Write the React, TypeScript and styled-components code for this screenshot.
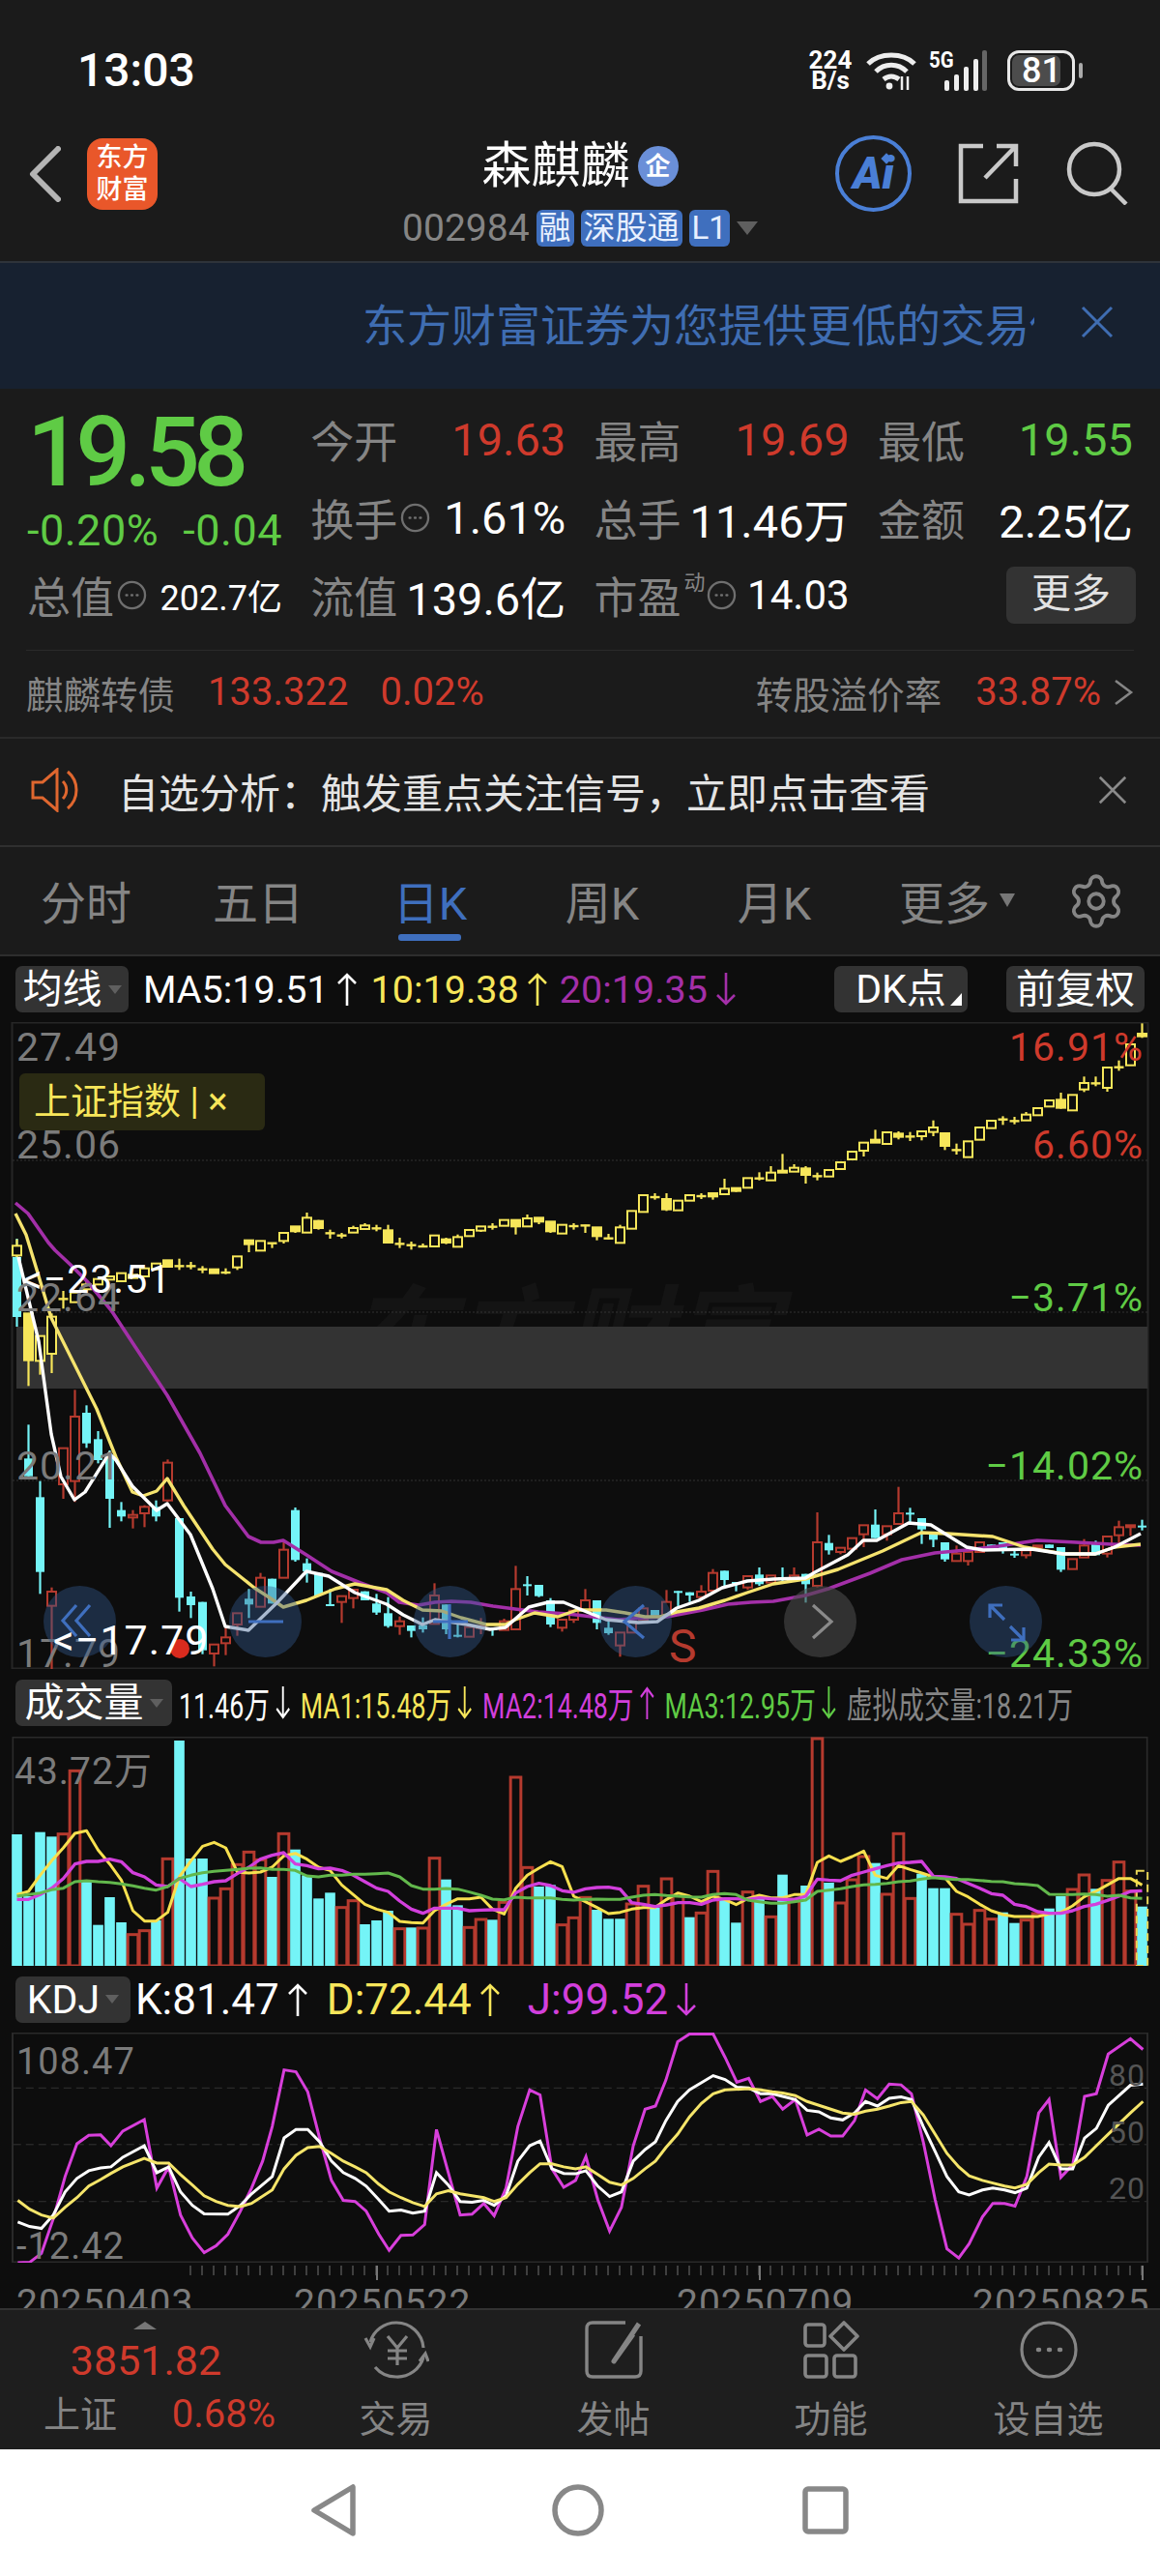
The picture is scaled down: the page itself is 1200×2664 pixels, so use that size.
import React from "react";
import styled, { createGlobalStyle } from "styled-components";
import { Settings } from "lucide-react";

const RED = "#cf3a2c";
const BAR_RED = "#b53a2e";
const GREEN = "#5fcb45";
const CYAN = "#74f4f7";
const YELLOW = "#f7e65a";
const PURPLE = "#a32fa8";
const PINK = "#d23fdc";
const BLUE = "#3f6fbe";
const GREY = "#858585";

const GlobalStyle = createGlobalStyle`
  html, body { margin: 0; padding: 0; background: #1b1b1b; overflow: hidden; }
  * { box-sizing: border-box; }
  body { font-family: Roboto, "Noto Sans CJK SC", sans-serif; }
`;

const Page = styled.div`
  width: 1200px;
  height: 2664px;
  display: flex;
  flex-direction: column;
  background: #1b1b1b;
  overflow: hidden;
`;

/* ---------- status bar ---------- */
const StatusBar = styled.div`
  height: 120px;
  display: flex;
  align-items: center;
  padding: 26px 78px 0 80px;
  color: #fff;
`;
const Clock = styled.div`
  font-size: 48px;
  font-weight: 500;
  flex: 1;
  line-height: 1;
`;
const StatusIcons = styled.div`
  display: flex;
  align-items: center;
  gap: 13px;
`;
const Speed = styled.div`
  font-size: 26px;
  font-weight: 700;
  line-height: 21px;
  text-align: center;
  width: 48px;
`;
const FiveG = styled.span`
  font-size: 24px;
  font-weight: 700;
  position: absolute;
  left: 0;
  top: -4px;
  transform: scaleX(0.85);
  transform-origin: left;
`;
const SignalWrap = styled.div`
  position: relative;
  width: 62px;
  height: 42px;
  margin-right: 6px;
`;
const Battery = styled.div`
  width: 70px;
  height: 42px;
  border: 3px solid #e8e8e8;
  border-radius: 12px;
  padding: 2px;
  position: relative;
  margin-right: 10px;
  &::after {
    content: "";
    position: absolute;
    right: -11px;
    top: 10px;
    width: 4px;
    height: 16px;
    background: #aaa;
    border-radius: 2px;
  }
`;
const BatteryFill = styled.div`
  height: 100%;
  width: 84%;
  background: #4c4c4c;
  border-radius: 7px;
  font-size: 36px;
  font-weight: 500;
  line-height: 32px;
  padding-left: 10px;
`;

/* ---------- stock header ---------- */
const Header = styled.div`
  height: 152px;
  display: grid;
  grid-template-columns: 1fr auto 1fr;
  border-bottom: 2px solid #2e333a;
`;
const HeaderLeft = styled.div`
  display: flex;
  align-items: center;
  gap: 27px;
  padding: 0 0 30px 30px;
`;
const Logo = styled.div`
  width: 73px;
  height: 74px;
  border-radius: 16px;
  background: #e9572a;
  color: #fff;
  font-size: 27px;
  font-weight: 500;
  line-height: 33px;
  text-align: center;
  padding-top: 4px;
`;
const HeaderCenter = styled.div`
  display: flex;
  flex-direction: column;
  align-items: center;
  padding-top: 24px;
  gap: 16px;
`;
const TitleRow = styled.div`
  display: flex;
  align-items: center;
  gap: 8px;
  color: #fff;
  font-size: 51px;
  line-height: 56px;
`;
const QualBadge = styled.span`
  width: 42px;
  height: 42px;
  border-radius: 50%;
  background: #6a8fd8;
  color: #fff;
  font-size: 26px;
  font-weight: 700;
  line-height: 42px;
  text-align: center;
`;
const SubRow = styled.div`
  display: flex;
  align-items: center;
  gap: 7px;
  font-size: 39px;
  color: ${GREY};
  line-height: 40px;
`;
const Tag = styled.span`
  background: ${BLUE};
  color: #e8f0ff;
  border-radius: 6px;
  font-size: 33px;
  line-height: 38px;
  height: 38px;
  padding: 0 3px;
`;
const Caret = styled.span<{ $w?: number }>`
  width: 0;
  height: 0;
  border-left: ${(p) => p.$w ?? 11}px solid transparent;
  border-right: ${(p) => p.$w ?? 11}px solid transparent;
  border-top: ${(p) => (p.$w ?? 11) * 1.3}px solid #5f5f5f;
`;
const HeaderRight = styled.div`
  display: flex;
  justify-content: flex-end;
  align-items: center;
  gap: 48px;
  padding: 0 32px 32px 0;
`;
const AiCircle = styled.div`
  width: 79px;
  height: 79px;
  border: 4px solid #4a7fd6;
  border-radius: 50%;
  color: #4a7fd6;
  font-size: 46px;
  font-weight: 900;
  font-style: italic;
  text-align: center;
  line-height: 70px;
  position: relative;
  &::after {
    content: "";
    position: absolute;
    right: 18px;
    top: 16px;
    width: 8px;
    height: 8px;
    background: #4a7fd6;
    transform: rotate(45deg);
  }
`;

/* ---------- banner ---------- */
const Banner = styled.div`
  height: 130px;
  background: #172130;
  display: flex;
  align-items: center;
  padding: 0 48px 8px 375px;
  justify-content: space-between;
`;
const BannerText = styled.div`
  width: 695px;
  overflow: hidden;
  white-space: nowrap;
  font-size: 46px;
  color: #3f6db2;
`;

/* ---------- quote ---------- */
const Quote = styled.div`
  height: 270px;
  padding: 12px 28px 0;
  display: grid;
  grid-template-columns: repeat(4, 264px);
  grid-template-rows: 80px 82px 78px;
  column-gap: 29.3px;
`;
const Cell = styled.div`
  display: flex;
  align-items: center;
  justify-content: space-between;
  white-space: nowrap;
`;
const Price = styled.div`
  font-size: 100px;
  font-weight: 500;
  letter-spacing: -6.5px;
  color: ${GREEN};
  line-height: 1;
  padding: 4px 0 0 0;
`;
const Change = styled(Cell)`
  font-size: 45px;
  color: ${GREEN};
  padding-top: 26px;
  letter-spacing: 0.5px;
`;
const QLabel = styled.span`
  display: inline-flex;
  align-items: center;
  font-size: 45px;
  color: ${GREY};
  gap: 3px;
`;
const QValue = styled.span<{ $color?: string; $size?: number }>`
  font-size: ${(p) => p.$size ?? 47}px;
  color: ${(p) => p.$color ?? "#fff"};
`;
const Sup = styled.sup`
  font-size: 22px;
  margin: -24px -2px 0 0;
  color: ${GREY};
  line-height: 1;
`;
const MoreBtn = styled.div`
  width: 134px;
  height: 59px;
  background: #333;
  border-radius: 8px;
  color: #e2e2e2;
  font-size: 41px;
  text-align: center;
  line-height: 56px;
  margin-left: auto;
  margin-right: -3px;
`;

const BondRow = styled.div`
  height: 90px;
  margin: 0 27px;
  border-top: 1px solid #2a2a2a;
  display: flex;
  align-items: center;
  white-space: nowrap;
  padding-bottom: 4px;
`;
const BondName = styled.span<{ $gap?: number }>`
  font-size: 38.5px;
  color: ${GREY};
  margin-right: ${(p) => p.$gap ?? 0}px;
`;
const BondValue = styled.span<{ $gap?: number }>`
  font-size: 40px;
  color: ${RED};
  margin-right: ${(p) => p.$gap ?? 0}px;
`;
const Spacer = styled.div`
  flex: 1;
`;

const Notice = styled.div`
  height: 114px;
  border-top: 2px solid #2a2a2a;
  border-bottom: 2px solid #2f2f2f;
  display: flex;
  align-items: center;
  padding: 0 34px 4px 32px;
  font-size: 42px;
  color: #e4e4e4;
  gap: 34px;
`;

/* ---------- period tabs ---------- */
const Tabs = styled.div`
  height: 113px;
  display: flex;
  align-items: center;
  border-bottom: 2px solid #2e2e2e;
`;
const Tab = styled.div<{ $active?: boolean }>`
  width: 178px;
  height: 100%;
  display: flex;
  align-items: center;
  justify-content: center;
  gap: 10px;
  font-size: 47px;
  padding-bottom: 2px;
  color: ${(p) => (p.$active ? BLUE : GREY)};
  position: relative;
  &::after {
    content: "";
    display: ${(p) => (p.$active ? "block" : "none")};
    position: absolute;
    left: 56px;
    bottom: 14px;
    width: 65px;
    height: 7px;
    border-radius: 3px;
    background: ${BLUE};
  }
`;
const MoreTab = styled(Tab)`
  padding-left: 22px;
`;
const TabCaret = styled.span`
  width: 0;
  height: 0;
  border-left: 8px solid transparent;
  border-right: 8px solid transparent;
  border-top: 14px solid #777;
`;
const GearWrap = styled.div`
  flex: 1;
  display: flex;
  justify-content: center;
  color: ${GREY};
`;

/* ---------- chart column ---------- */
const ChartArea = styled.div`
  flex: 1;
  background: #0d0d0d;
  display: flex;
  flex-direction: column;
  min-height: 0;
`;
const ToolRow = styled.div<{ $h: number }>`
  height: ${(p) => p.$h}px;
  display: flex;
  align-items: center;
  padding: 0 16px;
  white-space: nowrap;
  flex: none;
`;
const Chip = styled.div<{ $w: number; $mr?: number }>`
  width: ${(p) => p.$w}px;
  height: 48px;
  flex: none;
  background: #333;
  border-radius: 7px;
  color: #fff;
  font-size: 41px;
  line-height: 46px;
  display: flex;
  align-items: center;
  justify-content: center;
  gap: 6px;
  margin-right: ${(p) => p.$mr ?? 0}px;
  position: relative;
`;
const ChipCorner = styled.span`
  position: absolute;
  right: 6px;
  bottom: 7px;
  width: 0;
  height: 0;
  border-left: 12px solid transparent;
  border-bottom: 13px solid #fff;
`;
const Legend = styled.span<{ $color: string; $size?: number; $mr?: number }>`
  display: inline-flex;
  align-items: center;
  gap: 8px;
  color: ${(p) => p.$color};
  font-size: ${(p) => p.$size ?? 39.5}px;
  margin-right: ${(p) => p.$mr ?? 0}px;
  flex: none;
`;
const SqueezedLegends = styled.div`
  display: flex;
  transform: scaleX(0.723);
  transform-origin: left center;
  flex: none;
`;
const Pane = styled.div`
  position: relative;
  width: 1200px;
  flex: none;
  overflow: hidden;
`;
const ChartSvg = styled.svg`
  display: block;
  position: relative;
`;
const AxisLabel = styled.span<{ $top: number; $left?: number; $right?: number; $color?: string; $size?: number }>`
  position: absolute;
  top: ${(p) => p.$top}px;
  ${(p) => (p.$left !== undefined ? `left: ${p.$left}px;` : "")}
  ${(p) => (p.$right !== undefined ? `right: ${p.$right}px;` : "")}
  color: ${(p) => p.$color ?? "#7b7b7b"};
  font-size: ${(p) => p.$size ?? 41}px;
  letter-spacing: 1px;
  line-height: 1;
  white-space: nowrap;
`;
const IndexChip = styled.div`
  position: absolute;
  left: 20px;
  top: 53px;
  width: 254px;
  height: 59px;
  background: #2a2a13;
  border-radius: 6px;
  color: ${YELLOW};
  font-size: 38px;
  line-height: 59px;
  padding-left: 15px;
  white-space: nowrap;
`;
const Watermark = styled.div`
  position: absolute;
  left: 358px;
  top: 272px;
  font-size: 112px;
  line-height: 1;
  font-weight: 700;
  font-style: italic;
  color: #141414;
  white-space: nowrap;
`;
const RoundBtn = styled.div<{ $left: number; $grey?: boolean }>`
  position: absolute;
  left: ${(p) => p.$left - 37}px;
  top: 583px;
  width: 75px;
  height: 74px;
  border-radius: 50%;
  background: ${(p) => (p.$grey ? "rgba(72,72,72,.62)" : "rgba(50,88,140,.42)")};
`;
const DotMark = styled.span`
  position: absolute;
  left: 176px;
  top: 638px;
  width: 20px;
  height: 20px;
  border-radius: 50%;
  background: #d92b1e;
`;
const AxisPane = styled(Pane)`
  height: 47px;
`;

/* ---------- bottom tools ---------- */
const BottomBar = styled.div`
  height: 146px;
  background: #1e1e1e;
  border-top: 2px solid #323232;
  display: flex;
  flex: none;
`;
const IndexCell = styled.div`
  width: 297px;
  display: flex;
  flex-direction: column;
  align-items: center;
  position: relative;
  padding-top: 30px;
`;
const IndexArrow = styled.span`
  position: absolute;
  left: 138px;
  top: 12px;
  width: 0;
  height: 0;
  border-left: 12px solid transparent;
  border-right: 12px solid transparent;
  border-bottom: 8px solid #777;
`;
const IndexValue = styled.div`
  font-size: 43px;
  line-height: 44px;
  color: ${RED};
  margin-left: 5px;
`;
const IndexRow = styled.div`
  display: flex;
  width: 240px;
  justify-content: space-between;
  align-items: center;
  line-height: 44px;
  margin: 12px 0 0 33px;
`;
const IndexName = styled.span`
  font-size: 38px;
  color: ${GREY};
`;
const IndexPct = styled.span`
  font-size: 40px;
  color: ${RED};
`;
const NavItem = styled.div`
  width: 225px;
  display: flex;
  flex-direction: column;
  align-items: center;
  color: ${GREY};
  font-size: 38px;
  line-height: 44px;
  padding-top: 11px;
  gap: 20px;
`;
const SystemBar = styled.div`
  height: 131px;
  background: #fff;
  flex: none;
  display: flex;
  align-items: center;
  padding: 0 0 6px 0;
`;
const SystemSlot = styled.div<{ $w: number }>`
  width: ${(p) => p.$w}px;
  display: flex;
  justify-content: flex-end;
`;

/* ---------- small drawings ---------- */
const Arrow = ({ up, color, h = 34 }: { up?: boolean; color: string; h?: number }) => (
  <svg width="22" height={h} viewBox={`0 0 22 ${h}`} fill="none" stroke={color} strokeWidth="2.6" style={{ transform: up ? undefined : "scaleY(-1)" }}>
    <path d={`M11 ${h} V2 M2 11 L11 2 L20 11`} />
  </svg>
);

const DotsCircle = ({ size = 31, color = "#6f6f6f" }: { size?: number; color?: string }) => (
  <svg width={size} height={size} viewBox="0 0 32 32" fill="none" stroke={color} strokeWidth="2.4">
    <circle cx="16" cy="16" r="14" />
    <path d="M10 16h.8M15.6 16h.8M21.2 16h.8" strokeWidth="2.6" strokeLinecap="round" />
  </svg>
);

const CloseX = ({ size, color }: { size: number; color: string }) => (
  <svg width={size} height={size} viewBox="0 0 34 34" stroke={color} strokeWidth="3" fill="none">
    <path d="M2 2 L32 32 M32 2 L2 32" />
  </svg>
);

const cross = (x: number, hi: number, lo: number, color: string, k: string) => <line key={k} x1={x} x2={x} y1={hi} y2={lo} stroke={color} strokeWidth="2.2" />;

/* ---------- main chart data (read off the screenshot) ---------- */
type C = [number, number, number, number, number?];
const xOf = (i: number) => 17.5 + 12 * i;

// index candles: hi, body top, body bottom, lo, solid flag; y = 1000 + v / 3
const indexCandles: C[] = [
  [845, 865, 895, 900], [1075, 1075, 1220, 1300, 1], [1145, 1145, 1222, 1265], [1075, 1085, 1200, 1260],
  [1005, 1028, 1032, 1060], [1010, 1010, 1040, 1040], [975, 985, 1000, 1000], [968, 968, 985, 985],
  [960, 960, 970, 970], [950, 950, 975, 975], [955, 955, 965, 965], [935, 935, 960, 960], [920, 920, 938, 938],
  [910, 910, 930, 930, 1], [905, 926, 929, 940], [915, 926, 929, 938], [928, 936, 939, 950], [938, 938, 950, 950, 1],
  [935, 946, 949, 953], [898, 898, 932, 940], [848, 848, 860, 885, 1], [850, 850, 880, 880], [855, 855, 860, 872, 1],
  [825, 825, 850, 858], [805, 805, 820, 825, 1], [762, 778, 824, 824], [785, 788, 810, 815, 1], [815, 824, 827, 843],
  [825, 831, 834, 842], [803, 810, 824, 824], [795, 802, 813, 813], [800, 809, 812, 820], [800, 817, 855, 855, 1],
  [840, 857, 860, 872], [852, 861, 864, 877], [858, 865, 870, 870, 1], [833, 833, 867, 867], [840, 845, 855, 860, 1],
  [830, 838, 868, 868], [816, 816, 835, 835], [805, 805, 818, 822], [795, 804, 807, 815], [785, 785, 803, 803],
  [785, 785, 805, 830, 1], [768, 780, 805, 805], [778, 778, 790, 798, 1], [790, 790, 820, 825, 1], [800, 800, 827, 827],
  [795, 802, 805, 815], [800, 800, 805, 825, 1], [808, 808, 835, 848, 1], [828, 840, 845, 845, 1], [800, 808, 856, 856],
  [757, 757, 812, 812], [708, 708, 760, 760], [702, 712, 715, 722], [702, 720, 752, 757, 1], [725, 725, 755, 755],
  [708, 708, 725, 725], [702, 709, 712, 720], [702, 702, 712, 722, 1], [657, 688, 705, 705], [686, 686, 695, 698, 1],
  [655, 655, 685, 685], [637, 654, 657, 662], [618, 638, 662, 662], [580, 632, 638, 638, 1], [612, 623, 635, 635],
  [618, 625, 645, 672, 1], [638, 647, 650, 662], [630, 630, 650, 650], [606, 606, 627, 627], [573, 573, 597, 597],
  [545, 545, 570, 588], [505, 536, 545, 545, 1], [513, 513, 549, 549], [510, 517, 527, 535, 1], [512, 524, 527, 540],
  [510, 510, 525, 538], [476, 498, 512, 525], [516, 516, 555, 568, 1], [548, 566, 569, 582], [541, 541, 590, 590],
  [498, 498, 536, 536], [477, 477, 500, 500], [463, 471, 474, 490], [465, 476, 479, 488], [450, 458, 476, 476],
  [438, 438, 460, 460], [414, 414, 433, 433], [390, 412, 437, 440, 1], [397, 397, 445, 445], [340, 360, 380, 388],
  [340, 359, 362, 370], [312, 312, 375, 387], [290, 309, 312, 322], [240, 240, 305, 305], [175, 207, 215, 220, 1],
];

type S = [number, number, number, number, string];
const c = "c";
const r = "r";
// stock candles, y = 1360 + v / 3
const stockA: S[] = [
  [-237, -180, 6, 36, c], [340, 445, 500, 500, c], [515, 565, 797, 865, c], [845, 858, 902, 1100, r], [413, 413, 525, 570, r],
  [232, 315, 515, 580, r], [280, 303, 398, 412, c], [360, 385, 450, 460, c], [420, 440, 570, 660, c], [580, 605, 625, 640, c],
  [605, 620, 628, 662, r], [590, 595, 615, 658, r], [575, 595, 625, 640, c], [448, 458, 575, 580, r], [630, 630, 877, 920, c],
  [858, 873, 900, 940, c], [890, 890, 1040, 1052, c], [1022, 1022, 1050, 1090, r], [970, 1000, 1018, 1055, r], [925, 925, 960, 995, r],
  [850, 880, 898, 940, c], [800, 815, 905, 905, r], [818, 818, 895, 895, c], [700, 728, 815, 815, r], [597, 605, 760, 765, c],
  [755, 770, 795, 830, c], [800, 800, 870, 870, c], [850, 897, 900, 903, c], [872, 872, 890, 955, r], [852, 852, 878, 910, r],
  [857, 857, 885, 885, c], [865, 895, 923, 930, c],
];
// y = 1500 + v / 3
const stockB: S[] = [
  [455, 505, 545, 550, c], [515, 530, 545, 572, r], [543, 543, 560, 580, c], [518, 542, 555, 565, c], [412, 450, 538, 538, r],
  [478, 478, 555, 570, c], [540, 572, 575, 580, c], [548, 548, 578, 578, r], [520, 545, 548, 570, r], [550, 550, 555, 575, c],
  [522, 530, 557, 557, r], [358, 430, 555, 555, r], [390, 415, 420, 450, c], [417, 417, 452, 455, c], [458, 465, 540, 548, c],
  [525, 525, 550, 562, r], [497, 497, 525, 535, r], [430, 465, 495, 495, r], [465, 465, 535, 555, c], [525, 550, 567, 572, c],
  [565, 565, 605, 640, r], [530, 530, 565, 565, r], [490, 490, 525, 525, r], [495, 495, 515, 515, c], [433, 470, 512, 512, r],
  [436, 436, 438, 485, c], [440, 440, 450, 470, c], [418, 438, 455, 455, r], [368, 380, 435, 435, r], [373, 373, 402, 420, c],
  [408, 408, 410, 437, c], [390, 390, 425, 432, r], [363, 385, 415, 420, c], [388, 388, 410, 410, r],
];
const stockC: S[] = [
  [363, 393, 402, 405, c], [363, 388, 402, 402, r], [383, 383, 415, 472, c], [192, 285, 420, 425, r], [262, 287, 310, 323, c],
  [302, 302, 315, 322, r], [272, 272, 305, 305, r], [232, 232, 260, 300, r], [183, 230, 272, 272, c], [235, 235, 260, 280, r],
  [113, 195, 228, 228, r], [178, 193, 197, 222, c], [210, 210, 245, 290, c], [255, 255, 277, 300, c], [285, 285, 338, 345, c],
  [295, 320, 343, 343, r], [315, 315, 343, 357, r], [285, 285, 315, 315, r], [292, 292, 294, 300, c], [285, 285, 312, 320, c],
  [305, 320, 325, 333, c], [310, 310, 325, 335, r], [295, 295, 300, 300, r], [292, 292, 303, 303, c], [300, 300, 370, 377, c],
  [337, 337, 368, 368, r], [275, 295, 332, 332, r], [280, 290, 325, 325, c], [267, 267, 320, 332, r], [218, 238, 263, 290, r],
  [232, 232, 237, 265, r], [215, 233, 237, 248, c],
];

const ma20 = "16,1244 29,1255 50,1285 57,1293 73,1308 90,1325 115,1355 140,1393 173,1443 207,1503 233,1557 257,1589 270,1595 283,1595 293,1593 317,1608 343,1625 373,1637 400,1647 413,1657 433,1660 450,1657 467,1656 487,1657 510,1661 533,1664 557,1667 587,1669 613,1672 640,1675 667,1673 690,1672 727,1665 753,1659 777,1657 800,1656 833,1650 857,1643 900,1627 933,1613 967,1606 1000,1603 1033,1599 1073,1593 1113,1595 1150,1597 1180,1598";
const ma10 = "16,1255 27,1277 38,1313 53,1363 83,1423 100,1457 120,1507 137,1543 148,1547 162,1542 173,1529 190,1557 220,1602 233,1618 263,1642 280,1653 293,1662 317,1655 347,1643 367,1638 400,1644 417,1655 437,1665 457,1666 477,1673 503,1680 523,1680 533,1675 553,1668 577,1672 597,1665 627,1665 647,1668 667,1672 683,1672 700,1667 723,1663 750,1655 773,1647 800,1638 833,1633 867,1623 913,1604 953,1585 980,1586 1027,1589 1060,1600 1100,1607 1133,1607 1153,1600 1180,1597";
const ma5 = "19,1300 31,1350 40,1387 53,1483 63,1527 77,1551 88,1543 113,1503 120,1510 137,1537 162,1562 173,1555 197,1587 220,1643 233,1682 257,1686 287,1657 317,1625 340,1630 367,1647 400,1659 417,1670 437,1680 450,1675 483,1680 507,1685 523,1683 547,1662 567,1657 583,1657 607,1667 627,1675 660,1678 680,1677 700,1663 723,1655 747,1642 773,1635 800,1633 833,1632 843,1626 877,1608 893,1593 907,1593 940,1575 963,1577 1000,1600 1017,1603 1067,1602 1100,1607 1133,1607 1153,1600 1180,1586";

/* ---------- volume data: zoom units, x3 of page px ---------- */
const volBars: [number, string][] = [
  [303, c], [495, c], [296, c], [310, c], [298, r], [102, r], [450, c], [584, c], [498, c], [576, c], [610, r], [598, r], [570, c], [375, r], [12, c], [378, c], [378, c],
  [497, r], [468, r], [393, r], [354, r], [378, r], [435, c], [297, r], [350, c], [430, c], [502, c], [484, c], [526, r], [505, r], [582, c], [570, c], [540, c],
  [592, r], [592, c], [590, r], [373, r], [443, c], [523, c], [588, r], [563, r], [568, c], [510, r], [122, r], [402, r], [465, c], [460, c], [580, r], [558, r], [495, r],
  [537, c], [565, c], [565, c], [515, r], [460, r], [530, c], [437, r], [490, r], [560, c], [543, r], [414, r], [505, c], [577, c], [478, r], [492, c], [555, r],
  [428, c], [500, r], [462, c], [2, r], [453, c], [512, r], [440, r], [368, r], [392, c], [485, r], [297, r], [498, r], [425, c], [470, c], [470, c], [547, r], [578, r],
  [535, r], [562, r], [545, c], [578, c], [565, r], [545, r], [533, c], [495, c], [470, r], [425, r], [472, c], [442, r], [385, r], [475, r], [527, c],
];
const volX = (i: number) => 52.5 + 36 * i;
const series = (ys: number[]) => ys.map((y, i) => `${volX(i)},${y}`).join(" ");
const vol1 = series([490, 480, 430, 385, 345, 300, 292, 352, 395, 445, 540, 572, 572, 545, 435, 385, 340, 328, 345, 420, 423, 420, 405, 370, 362, 380, 405, 415, 460, 490, 520, 535, 545,
  573, 577, 578, 540, 520, 503, 503, 498, 535, 550, 470, 430, 408, 388, 403, 495, 512, 530, 549, 545, 535, 530, 530, 505, 485, 495, 512, 495, 505, 521, 502, 492, 500,
  500, 490, 490, 390, 370, 387, 372, 355, 430, 440, 400, 412, 423, 435, 437, 480, 497, 520, 540, 552, 558, 558, 558, 550, 545, 525, 497, 480, 460, 440, 440, 460]);
const vol2 = series([505, 505, 490, 470, 440, 395, 387, 387, 380, 388, 422, 435, 460, 465, 440, 465, 458, 450, 447, 425, 405, 380, 368, 360, 395, 400, 410, 408, 415, 430, 450, 470, 480,
  510, 535, 548, 532, 532, 532, 540, 538, 537, 537, 485, 465, 455, 462, 478, 483, 472, 468, 467, 473, 515, 520, 527, 522, 515, 515, 520, 507, 503, 503, 505, 500, 503,
  505, 505, 495, 442, 445, 447, 430, 420, 410, 400, 392, 390, 387, 433, 435, 440, 455, 470, 487, 492, 520, 527, 543, 548, 548, 540, 527, 520, 508, 495, 480, 478]);
const vol3 = series([495, 490, 485, 475, 470, 450, 447, 450, 452, 457, 463, 470, 476, 465, 440, 430, 422, 418, 415, 412, 408, 407, 412, 412, 415, 432, 435, 430, 430, 427, 427, 425, 423,
  435, 462, 473, 473, 471, 473, 482, 492, 504, 506, 498, 500, 500, 500, 505, 507, 505, 504, 505, 505, 498, 492, 490, 493, 495, 497, 498, 490, 487, 490, 507, 512, 517,
  517, 512, 507, 480, 476, 472, 465, 460, 458, 455, 450, 448, 442, 437, 441, 443, 443, 446, 449, 450, 456, 458, 462, 489, 490, 490, 488, 490, 495, 492, 500, 502]);

/* ---------- kdj data ---------- */
const kdjJ = "24,754 40,753 56,730 72,640 88,530 104,445 120,423 136,422 150,450 166,412 195,382 212,560 228,505 244,630 260,690 276,728 292,710 308,680 325,620 340,560 355,490 368,400 384,253 400,258 416,310 432,430 448,540 464,592 480,595 495,620 512,680 526,722 542,683 558,682 574,655 590,408 606,520 622,630 638,628 654,600 668,632 684,560 700,400 716,305 730,318 746,510 762,558 778,540 792,478 808,590 824,672 840,610 856,450 872,355 886,347 900,280 916,180 932,160 964,160 980,220 996,285 1012,275 1028,335 1044,322 1058,355 1075,330 1091,422 1107,407 1123,425 1139,425 1155,385 1170,305 1186,328 1202,290 1218,292 1232,315 1248,440 1264,590 1280,718 1296,742 1310,705 1328,635 1342,600 1358,600 1372,607 1388,530 1404,365 1418,330 1434,532 1450,500 1466,322 1482,315 1498,212 1528,172 1545,200";
const kdjK = "24,648 40,660 56,665 72,630 88,570 104,535 120,515 136,508 150,505 166,480 195,450 212,520 228,505 244,570 260,605 276,627 308,628 325,605 340,575 368,530 384,430 400,408 416,408 432,440 448,490 464,520 480,535 495,555 512,590 526,620 542,617 558,625 574,620 590,520 606,552 622,595 638,597 654,592 668,605 684,580 700,490 716,450 730,438 746,510 762,522 778,523 792,515 808,555 824,582 840,570 856,490 872,460 886,440 900,385 916,335 932,305 964,268 980,278 996,298 1012,300 1028,315 1044,315 1058,322 1075,330 1091,358 1107,362 1123,378 1139,383 1155,365 1170,335 1186,347 1202,327 1218,323 1232,330 1248,400 1264,465 1280,530 1296,570 1310,578 1328,565 1342,560 1358,565 1372,572 1388,560 1404,480 1418,442 1434,510 1450,510 1466,430 1482,405 1498,345 1528,293 1545,290";
const kdjD = "24,592 40,615 56,630 72,638 88,610 104,585 120,555 136,538 150,522 166,505 195,483 212,495 228,495 244,525 260,552 276,580 292,595 308,605 325,608 340,600 368,565 384,510 400,475 416,455 432,452 448,470 464,490 480,505 495,520 512,550 526,570 542,585 558,598 574,608 590,575 606,567 622,575 638,580 654,585 668,595 684,585 700,550 716,520 730,497 746,497 762,505 778,510 792,505 808,525 824,545 840,552 856,535 872,510 886,490 900,455 916,420 932,375 948,340 964,315 980,305 1012,302 1028,305 1044,310 1058,313 1075,320 1091,335 1107,345 1123,355 1139,365 1155,368 1170,360 1186,355 1202,347 1218,338 1232,335 1248,370 1264,420 1280,470 1296,505 1310,528 1328,540 1342,547 1358,555 1372,560 1388,550 1404,520 1418,498 1434,500 1450,500 1466,480 1482,450 1498,420 1528,365 1545,335";

const renderIndexCandle = (d: C, i: number) => {
  const x = xOf(i);
  const y = (v: number) => 1000 + v / 3;
  const [hi, top, bot, lo, solid] = d;
  const flat = bot - top < 6;
  return (
    <g key={i}>
      {cross(x, y(hi), y(lo), YELLOW, "l")}
      {flat ? (
        <rect x={x - 5} y={y(top) - 0.5} width={10} height={2.4} fill={YELLOW} />
      ) : (
        <rect x={x - 4.5} y={y(top)} width={9} height={(bot - top) / 3} fill={solid ? YELLOW : "#0d0d0d"} stroke={YELLOW} strokeWidth={2} />
      )}
    </g>
  );
};

const renderStockCandle = (d: S, i: number, base: number, start: number) => {
  const x = xOf(i + start);
  const y = (v: number) => base + v / 3;
  const [hi, top, bot, lo, kind] = d;
  const color = kind === c ? CYAN : BAR_RED;
  return (
    <g key={i + start}>
      {cross(x, y(hi), y(lo), color, "l")}
      {kind === c ? (
        <rect x={x - 4.5} y={y(top)} width={9} height={Math.max((bot - top) / 3, 2)} fill={CYAN} />
      ) : (
        <rect x={x - 4.5} y={y(top)} width={9} height={Math.max((bot - top) / 3, 2)} fill="#0d0d0d" stroke={BAR_RED} strokeWidth={2} />
      )}
    </g>
  );
};

const MainChart = () => (
  <ChartSvg width="1200" height="669" viewBox="0 1057 1200 669">
    <rect x="12.5" y="1057.5" width="1175" height="668" fill="none" stroke="#262626" strokeWidth="2" />
    <line x1="13" x2="1187" y1="1200" y2="1200" stroke="#333" strokeDasharray="2 2" />
    <line x1="13" x2="1187" y1="1357" y2="1357" stroke="#333" strokeDasharray="2 2" />
    <line x1="13" x2="1187" y1="1531" y2="1531" stroke="#333" strokeDasharray="2 2" />
    <rect x="17" y="1372" width="1170" height="64" fill="#333" />
    {stockA.map((d, i) => renderStockCandle(d, i, 1360, 0))}
    {stockB.map((d, i) => renderStockCandle(d, i, 1500, 32))}
    {stockC.map((d, i) => renderStockCandle(d, i, 1500, 66))}
    {indexCandles.map(renderIndexCandle)}
    <polyline points={ma20} fill="none" stroke={PURPLE} strokeWidth="3.6" strokeLinejoin="round" />
    <polyline points={ma10} fill="none" stroke="#f5e36e" strokeWidth="3.4" strokeLinejoin="round" />
    <polyline points={ma5} fill="none" stroke="#fff" strokeWidth="3.4" strokeLinejoin="round" />
  </ChartSvg>
);

const VolumeChart = () => (
  <ChartSvg width="1200" height="237" viewBox="0 0 3600 711">
    <rect x="40" y="2" width="3520" height="708" fill="none" stroke="#2a2a2a" strokeWidth="5" />
    {volBars.map(([top, kind], i) =>
      kind === c ? (
        <rect key={i} x={volX(i) - 16} y={top} width={32} height={711 - top} fill={CYAN} />
      ) : (
        <rect key={i} x={volX(i) - 16} y={top + 4} width={32} height={707 - top} fill="none" stroke={BAR_RED} strokeWidth={9} />
      )
    )}
    <rect x={volX(97) - 17} y="416" width="34" height="295" fill="none" stroke="#e8d657" strokeWidth="6" strokeDasharray="24 14" />
    <polyline points={vol1} fill="none" stroke="#f7e04f" strokeWidth="9" strokeLinejoin="round" />
    <polyline points={vol2} fill="none" stroke={PINK} strokeWidth="10" strokeLinejoin="round" />
    <polyline points={vol3} fill="none" stroke="#62b84c" strokeWidth="9" strokeLinejoin="round" />
  </ChartSvg>
);

const KdjChart = () => (
  <ChartSvg width="1200" height="238" viewBox="0 156 1568 598" preserveAspectRatio="none">
    <rect x="17" y="157" width="1534" height="596" fill="none" stroke="#2a2a2a" strokeWidth="2" vectorEffect="non-scaling-stroke" />
    {[300, 447, 595].map((y) => (
      <line key={y} x1="18" x2="1550" y1={y} y2={y} stroke="#333" strokeDasharray="8 5" vectorEffect="non-scaling-stroke" />
    ))}
    <polyline points={kdjJ} fill="none" stroke="#d83fdb" strokeWidth="3" vectorEffect="non-scaling-stroke" />
    <polyline points={kdjK} fill="none" stroke="#fff" strokeWidth="3" vectorEffect="non-scaling-stroke" />
    <polyline points={kdjD} fill="none" stroke="#f5e56a" strokeWidth="3" vectorEffect="non-scaling-stroke" />
  </ChartSvg>
);

const ticks = Array.from({ length: 83 }, (_, i) => 197 + 12 * i);

const App = () => (
  <Page>
    <GlobalStyle />
    <StatusBar>
      <Clock>13:03</Clock>
      <StatusIcons>
        <Speed>
          224
          <br />
          B/s
        </Speed>
        <svg width="52" height="42" viewBox="0 0 52 42" fill="none" stroke="#eee" strokeWidth="5">
          <path d="M2 14 C14 2 38 2 50 14" />
          <path d="M10 22 C19 13 33 13 42 22" />
          <path d="M18 30 C23 26 29 26 34 30" />
          <circle cx="24" cy="37" r="3.4" fill="#eee" stroke="none" />
          <path d="M37 27 V41 M43 27 V41" strokeWidth="2.5" />
        </svg>
        <SignalWrap>
          <FiveG>5G</FiveG>
          <svg width="62" height="42" viewBox="0 0 62 42">
            <rect x="16" y="31" width="5" height="11" rx="2" fill="#eee" />
            <rect x="26" y="25" width="5" height="17" rx="2" fill="#eee" />
            <rect x="36" y="17" width="5" height="25" rx="2" fill="#eee" />
            <rect x="46" y="9" width="5" height="33" rx="2" fill="#eee" />
            <rect x="55" y="0" width="5" height="42" rx="2" fill="#666" />
          </svg>
        </SignalWrap>
        <Battery>
          <BatteryFill>81</BatteryFill>
        </Battery>
      </StatusIcons>
    </StatusBar>

    <Header>
      <HeaderLeft>
        <svg width="33" height="58" viewBox="0 0 33 58" fill="none" stroke="#b4b4b4" strokeWidth="6" strokeLinecap="round" strokeLinejoin="round">
          <path d="M30 3 L4 29 L30 55" />
        </svg>
        <Logo>
          东方
          <br />
          财富
        </Logo>
      </HeaderLeft>
      <HeaderCenter>
        <TitleRow>
          森麒麟
          <QualBadge>企</QualBadge>
        </TitleRow>
        <SubRow>
          002984
          <Tag>融</Tag>
          <Tag>深股通</Tag>
          <Tag>L1</Tag>
          <Caret />
        </SubRow>
      </HeaderCenter>
      <HeaderRight>
        <AiCircle>Ai</AiCircle>
        <svg width="63" height="63" viewBox="0 0 63 63" fill="none" stroke="#c9c9c9" strokeWidth="4.5">
          <path d="M26 3 H3 V60 H60 V37 M28 36 L59 4 M40 3 H60 V24" />
        </svg>
        <svg width="66" height="66" viewBox="0 0 66 66" fill="none" stroke="#c9c9c9" strokeWidth="4.5">
          <circle cx="30" cy="29" r="26" />
          <path d="M47 49 L63 65" />
        </svg>
      </HeaderRight>
    </Header>

    <Banner>
      <BannerText>东方财富证券为您提供更低的交易佣金</BannerText>
      <CloseX size={34} color="#3f6db2" />
    </Banner>

    <Quote>
      <Price>19.58</Price>
      <Cell>
        <QLabel>今开</QLabel>
        <QValue $color={RED}>19.63</QValue>
      </Cell>
      <Cell>
        <QLabel>最高</QLabel>
        <QValue $color={RED}>19.69</QValue>
      </Cell>
      <Cell>
        <QLabel>最低</QLabel>
        <QValue $color={GREEN}>19.55</QValue>
      </Cell>

      <Change>
        <span>-0.20%</span>
        <span>-0.04</span>
      </Change>
      <Cell>
        <QLabel>
          换手
          <DotsCircle />
        </QLabel>
        <QValue>1.61%</QValue>
      </Cell>
      <Cell>
        <QLabel>总手</QLabel>
        <QValue>11.46万</QValue>
      </Cell>
      <Cell>
        <QLabel>金额</QLabel>
        <QValue>2.25亿</QValue>
      </Cell>

      <Cell>
        <QLabel>
          总值
          <DotsCircle />
        </QLabel>
        <QValue $size={36}>202.7亿</QValue>
      </Cell>
      <Cell>
        <QLabel>流值</QLabel>
        <QValue>139.6亿</QValue>
      </Cell>
      <Cell>
        <QLabel>
          市盈
          <Sup>动</Sup>
          <DotsCircle />
        </QLabel>
        <QValue $size={42}>14.03</QValue>
      </Cell>
      <Cell>
        <MoreBtn>更多</MoreBtn>
      </Cell>
    </Quote>

    <BondRow>
      <BondName $gap={34}>麒麟转债</BondName>
      <BondValue $gap={33}>133.322</BondValue>
      <BondValue>0.02%</BondValue>
      <Spacer />
      <BondName $gap={35}>转股溢价率</BondName>
      <BondValue $gap={12}>33.87%</BondValue>
      <svg width="22" height="28" viewBox="0 0 22 28" fill="none" stroke={GREY} strokeWidth="2.6">
        <path d="M3 2 L19 14 L3 26" />
      </svg>
    </BondRow>

    <Notice>
      <svg width="56" height="46" viewBox="0 0 56 46" fill="none" stroke="#e0672f" strokeWidth="3">
        <path d="M2 15 H12 L27 2 V44 L12 31 H2 Z" />
        <path d="M33 14 C38 19 38 27 33 32 M38 4 C50 14 50 32 38 42" />
      </svg>
      自选分析：触发重点关注信号，立即点击查看
      <Spacer />
      <CloseX size={30} color="#8a8a8a" />
    </Notice>

    <Tabs>
      <Tab>分时</Tab>
      <Tab>五日</Tab>
      <Tab $active>日K</Tab>
      <Tab>周K</Tab>
      <Tab>月K</Tab>
      <MoreTab>
        更多
        <TabCaret />
      </MoreTab>
      <GearWrap>
        <Settings size={62} strokeWidth={1.5} />
      </GearWrap>
    </Tabs>

    <ChartArea>
      <ToolRow $h={68}>
        <Chip $w={117} $mr={15}>
          均线
          <Caret $w={7} />
        </Chip>
        <Legend $color="#fff" $mr={14}>
          MA5:19.51
          <Arrow up color="#fff" />
        </Legend>
        <Legend $color={YELLOW} $mr={12}>
          10:19.38
          <Arrow up color={YELLOW} />
        </Legend>
        <Legend $color={PURPLE}>
          20:19.35
          <Arrow color={PURPLE} />
        </Legend>
        <Spacer />
        <Chip $w={138} $mr={40}>
          DK点
          <ChipCorner />
        </Chip>
        <Chip $w={143}>前复权</Chip>
      </ToolRow>

      <Pane>
        <Watermark>东方财富</Watermark>
        <MainChart />
        <AxisLabel $top={6} $left={17}>27.49</AxisLabel>
        <AxisLabel $top={107} $left={17}>25.06</AxisLabel>
        <AxisLabel $top={265} $left={17}>22.64</AxisLabel>
        <AxisLabel $top={439} $left={17}>20.21</AxisLabel>
        <AxisLabel $top={633} $left={17}>17.79</AxisLabel>
        <AxisLabel $top={6} $right={17} $color={RED}>16.91%</AxisLabel>
        <AxisLabel $top={107} $right={17} $color={RED}>6.60%</AxisLabel>
        <AxisLabel $top={265} $right={17} $color={GREEN}>−3.71%</AxisLabel>
        <AxisLabel $top={439} $right={17} $color={GREEN}>−14.02%</AxisLabel>
        <AxisLabel $top={633} $right={17} $color={GREEN}>−24.33%</AxisLabel>
        <IndexChip>上证指数 | ×</IndexChip>
        <AxisLabel $top={246} $left={23} $color="#fff">&lt;−23.51</AxisLabel>
        <RoundBtn $left={82}>
          <svg width="75" height="74" viewBox="0 0 75 74" fill="none" stroke={BLUE} strokeWidth="3.2">
            <path d="M34 20 L20 36 L34 52 M48 20 L34 36 L48 52" />
          </svg>
        </RoundBtn>
        <RoundBtn $left={274}>
          <svg width="75" height="74" viewBox="0 0 75 74" fill="none" stroke={BLUE} strokeWidth="3.2">
            <path d="M20 37 H56" />
          </svg>
        </RoundBtn>
        <RoundBtn $left={465}>
          <svg width="75" height="74" viewBox="0 0 75 74" fill="none" stroke={BLUE} strokeWidth="3.2">
            <path d="M20 37 H56 M37 19 V55" />
          </svg>
        </RoundBtn>
        <RoundBtn $left={657}>
          <svg width="75" height="74" viewBox="0 0 75 74" fill="none" stroke={BLUE} strokeWidth="3.2">
            <path d="M46 20 L26 37 L46 54" />
          </svg>
        </RoundBtn>
        <RoundBtn $left={848} $grey>
          <svg width="75" height="74" viewBox="0 0 75 74" fill="none" stroke="#8a8a8a" strokeWidth="3.2">
            <path d="M30 20 L49 37 L30 54" />
          </svg>
        </RoundBtn>
        <RoundBtn $left={1040}>
          <svg width="75" height="74" viewBox="0 0 75 74" fill="none" stroke={BLUE} strokeWidth="3.2">
            <path d="M21 33 V20 H34 M21 20 L36 35 M42 42 L56 56 M56 43 V56 H43" />
          </svg>
        </RoundBtn>
        <DotMark />
        <AxisLabel $top={622} $left={692} $color={BAR_RED} $size={48}>S</AxisLabel>
        <AxisLabel $top={618} $left={55} $color="#fff" $size={43}>&lt;−17.79</AxisLabel>
      </Pane>

      <ToolRow $h={70}>
        <Chip $w={162} $mr={7}>
          成交量
          <Caret $w={7} />
        </Chip>
        <SqueezedLegends>
          <Legend $color="#fff" $size={37} $mr={14}>
            11.46万
            <Arrow color="#fff" />
          </Legend>
          <Legend $color={YELLOW} $size={37} $mr={14}>
            MA1:15.48万
            <Arrow color={YELLOW} />
          </Legend>
          <Legend $color={PINK} $size={37} $mr={14}>
            MA2:14.48万
            <Arrow up color={PINK} />
          </Legend>
          <Legend $color={GREEN} $size={37} $mr={14}>
            MA3:12.95万
            <Arrow color={GREEN} />
          </Legend>
          <Legend $color={GREY} $size={37}>虚拟成交量:18.21万</Legend>
        </SqueezedLegends>
      </ToolRow>

      <Pane>
        <VolumeChart />
        <AxisLabel $top={17} $left={15} $size={39}>43.72万</AxisLabel>
      </Pane>

      <ToolRow $h={69}>
        <Chip $w={119} $mr={5}>
          KDJ
          <Caret $w={7} />
        </Chip>
        <Legend $color="#fff" $size={44} $mr={19}>
          K:81.47
          <Arrow up color="#fff" />
        </Legend>
        <Legend $color={YELLOW} $size={44} $mr={28}>
          D:72.44
          <Arrow up color={YELLOW} />
        </Legend>
        <Legend $color={PINK} $size={44}>
          J:99.52
          <Arrow color={PINK} />
        </Legend>
      </ToolRow>

      <Pane>
        <KdjChart />
        <AxisLabel $top={11} $left={17} $size={38}>108.47</AxisLabel>
        <AxisLabel $top={202} $left={17} $size={38}>-12.42</AxisLabel>
        <AxisLabel $top={28} $right={15} $size={32} $color="#555">80</AxisLabel>
        <AxisLabel $top={87} $right={15} $size={32} $color="#555">50</AxisLabel>
        <AxisLabel $top={145} $right={15} $size={32} $color="#555">20</AxisLabel>
      </Pane>

      <AxisPane>
        <ChartSvg width="1200" height="47" viewBox="0 0 1200 47">
          {ticks.map((x) => (
            <line key={x} x1={x} x2={x} y1="3" y2="13" stroke="#505050" strokeWidth="1.5" />
          ))}
          {[390, 786, 1182].map((x) => (
            <line key={x} x1={x} x2={x} y1="3" y2="18" stroke="#777" strokeWidth="2" />
          ))}
        </ChartSvg>
        <AxisLabel $top={23} $left={17} $size={39}>20250403</AxisLabel>
        <AxisLabel $top={23} $left={304} $size={39}>20250522</AxisLabel>
        <AxisLabel $top={23} $left={700} $size={39}>20250709</AxisLabel>
        <AxisLabel $top={23} $left={1006} $size={39}>20250825</AxisLabel>
      </AxisPane>
    </ChartArea>

    <BottomBar>
      <IndexCell>
        <IndexArrow />
        <IndexValue>3851.82</IndexValue>
        <IndexRow>
          <IndexName>上证</IndexName>
          <IndexPct>0.68%</IndexPct>
        </IndexRow>
      </IndexCell>
      <NavItem>
        <svg width="68" height="60" viewBox="0 0 68 60" fill="none" stroke={GREY} strokeWidth="3.2">
          <path d="M7 22 A28 28 0 0 1 34 2 A28 28 0 0 1 62 28 M62 38 A28 28 0 0 1 34 58 A28 28 0 0 1 12 48" />
          <path d="M2 18 L7 27 L11 18 M58 42 L64 34 L67 42" />
          <path d="M25 16 L35 28 L45 16 M35 28 V46 M25 31 H45 M25 39 H45" />
        </svg>
        交易
      </NavItem>
      <NavItem>
        <svg width="60" height="60" viewBox="0 0 60 60" fill="none" stroke={GREY} strokeWidth="3.4" strokeLinejoin="round">
          <path d="M42 2 H8 Q2 2 2 8 V52 Q2 58 8 58 H52 Q58 58 58 52 V16" />
          <path d="M56 3 L30 42 L50 14" strokeWidth="5" />
        </svg>
        发帖
      </NavItem>
      <NavItem>
        <svg width="58" height="60" viewBox="0 0 58 60" fill="none" stroke={GREY} strokeWidth="3.6" strokeLinejoin="round">
          <rect x="2" y="4" width="20" height="22" rx="3" />
          <path d="M42 2 L56 16 L42 30 L28 16 Z" />
          <rect x="2" y="36" width="22" height="22" rx="3" />
          <rect x="32" y="36" width="22" height="22" rx="3" />
        </svg>
        功能
      </NavItem>
      <NavItem>
        <svg width="60" height="60" viewBox="0 0 60 60" fill="none" stroke={GREY} strokeWidth="3.2">
          <circle cx="30" cy="30" r="28" />
          <path d="M19 30h1M30 30h1M41 30h1" strokeWidth="4.5" strokeLinecap="round" />
        </svg>
        设自选
      </NavItem>
    </BottomBar>

    <SystemBar>
      <SystemSlot $w={368}>
        <svg width="46" height="54" viewBox="0 0 46 54" fill="none" stroke="#888" strokeWidth="5.5" strokeLinejoin="round">
          <path d="M43 3 V51 L3 27 Z" />
        </svg>
      </SystemSlot>
      <SystemSlot $w={257}>
        <svg width="54" height="54" viewBox="0 0 54 54" fill="none" stroke="#888" strokeWidth="5.5">
          <circle cx="27" cy="27" r="24" />
        </svg>
      </SystemSlot>
      <SystemSlot $w={253}>
        <svg width="48" height="50" viewBox="0 0 48 50" fill="none" stroke="#888" strokeWidth="5.5" strokeLinejoin="round">
          <rect x="3" y="3" width="42" height="44" rx="3" />
        </svg>
      </SystemSlot>
    </SystemBar>
  </Page>
);

export default App;
